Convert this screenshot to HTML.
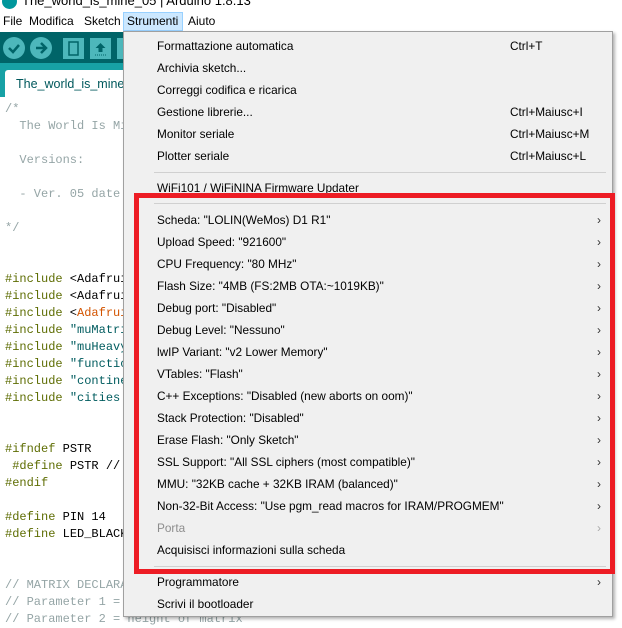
<!DOCTYPE html>
<html><head><meta charset="utf-8"><style>
*{margin:0;padding:0;box-sizing:border-box}
body{width:622px;height:627px;overflow:hidden;background:#fff;font-family:"Liberation Sans",sans-serif;position:relative}
.abs{position:absolute}
.title{left:0;top:0;width:622px;height:12px;background:#fff;overflow:hidden}
.title span{position:absolute;left:22px;top:-7px;font-size:13px;color:#000;white-space:nowrap}
.logo{left:2px;top:-6px;width:15px;height:15px;border-radius:50%;background:#00979c}
.mb{top:12px;height:19px;font-size:12px;color:#000;line-height:19px}
.tb{left:0;top:32px;width:124px;height:31px;background:#006468}
.rb{width:22px;height:22px;border-radius:50%;background:#4db7bb;top:37px}
.sq{width:21px;height:21px;background:#4db7bb;top:38px}
.ts{left:0;top:63px;width:124px;height:34px;background:#17a1a5}
.tab{left:5px;top:70px;width:119px;height:27px;background:#fff;border-radius:3px 0 0 0;font-size:12.5px;color:#00585c;padding:7px 0 0 11px;white-space:nowrap;overflow:hidden}
.code{font-family:"Liberation Mono",monospace;font-size:12px;white-space:pre;left:5px;line-height:17px}
.menu{left:123px;top:31px;width:490px;height:586px;background:#f0f0f0;border:1px solid #a0a0a0;box-shadow:2px 2px 3px rgba(0,0,0,.3)}
.it{position:absolute;left:33px;font-size:11.8px;color:#000;white-space:nowrap;height:22px;line-height:22px}
.sc{position:absolute;left:386px;font-size:11.8px;white-space:nowrap;height:22px;line-height:22px}
.ar{position:absolute;left:473px;font-size:12px;color:#333;height:22px;line-height:22px}
.sep{position:absolute;left:30px;right:6px;height:1px;background:#d0d0d0}
.red{left:134px;top:193px;width:481px;height:381px;border:5px solid #ed1c24}
</style></head><body>
<div class="abs title"><div class="abs logo"></div><span>The_world_is_mine_05 | Arduino 1.8.13</span></div>
<div class="abs mb" style="left:3px">File</div>
<div class="abs mb" style="left:29px">Modifica</div>
<div class="abs mb" style="left:84px">Sketch</div>
<div class="abs" style="left:123px;top:12px;width:60px;height:19px;background:#cce8ff;border:1px solid #99d1ff"></div>
<div class="abs mb" style="left:127px">Strumenti</div>
<div class="abs mb" style="left:188px">Aiuto</div>
<div class="abs tb"></div>
<div class="abs rb" style="left:3px"><svg width="22" height="22"><path d="M6 11l4 4 6-7" stroke="#006468" stroke-width="2.5" fill="none"/></svg></div>
<div class="abs rb" style="left:30px"><svg width="22" height="22"><path d="M6 11h9M11 6l5 5-5 5" stroke="#006468" stroke-width="2.5" fill="none"/></svg></div>
<div class="abs sq" style="left:63px"><svg width="21" height="21"><rect x="6" y="4" width="9" height="13" fill="none" stroke="#006468" stroke-width="1.5"/></svg></div>
<div class="abs sq" style="left:90px"><svg width="21" height="21"><path d="M10.5 5l-5 5h3v4h4v-4h3z" fill="#006468"/><path d="M5 17h11" stroke="#006468" stroke-dasharray="1 1"/></svg></div>
<div class="abs sq" style="left:117px;width:7px"></div>
<div class="abs ts"></div>
<div class="abs tab">The_world_is_mine_05</div>
<div class="abs code" style="top:101px;color:#95a5a6">/*
  The World Is Mine

  Versions:

  - Ver. 05 date

*/</div>
<div class="abs code" style="top:271px;color:#000"><span style="color:#5e6d03">#include</span> &lt;Adafruit
<span style="color:#5e6d03">#include</span> &lt;Adafruit
<span style="color:#5e6d03">#include</span> &lt;<span style="color:#d35400">Adafruit</span>
<span style="color:#5e6d03">#include</span> <span style="color:#005c5f">"muMatrix</span>
<span style="color:#5e6d03">#include</span> <span style="color:#005c5f">"muHeavy</span>
<span style="color:#5e6d03">#include</span> <span style="color:#005c5f">"functio</span>
<span style="color:#5e6d03">#include</span> <span style="color:#005c5f">"contine</span>
<span style="color:#5e6d03">#include</span> <span style="color:#005c5f">"cities.</span>


<span style="color:#5e6d03">#ifndef</span> PSTR
 <span style="color:#5e6d03">#define</span> PSTR //
<span style="color:#5e6d03">#endif</span>

<span style="color:#5e6d03">#define</span> PIN 14
<span style="color:#5e6d03">#define</span> LED_BLACK


<span style="color:#95a5a6">// MATRIX DECLARA
// Parameter 1 =
// Parameter 2 = height of matrix</span></div>
<div class="abs menu">
<div class="it" style="top:3px">Formattazione automatica</div><div class="sc" style="top:3px">Ctrl+T</div>
<div class="it" style="top:25px">Archivia sketch...</div>
<div class="it" style="top:47px">Correggi codifica e ricarica</div>
<div class="it" style="top:69px">Gestione librerie...</div><div class="sc" style="top:69px">Ctrl+Maiusc+I</div>
<div class="it" style="top:91px">Monitor seriale</div><div class="sc" style="top:91px">Ctrl+Maiusc+M</div>
<div class="it" style="top:113px">Plotter seriale</div><div class="sc" style="top:113px">Ctrl+Maiusc+L</div>
<div class="sep" style="top:140px"></div>
<div class="it" style="top:145px">WiFi101 / WiFiNINA Firmware Updater</div>
<div class="sep" style="top:171px"></div>
<div class="it" style="top:177px">Scheda: "LOLIN(WeMos) D1 R1"</div><div class="ar" style="top:177px">›</div>
<div class="it" style="top:199px">Upload Speed: "921600"</div><div class="ar" style="top:199px">›</div>
<div class="it" style="top:221px">CPU Frequency: "80 MHz"</div><div class="ar" style="top:221px">›</div>
<div class="it" style="top:243px">Flash Size: "4MB (FS:2MB OTA:~1019KB)"</div><div class="ar" style="top:243px">›</div>
<div class="it" style="top:265px">Debug port: "Disabled"</div><div class="ar" style="top:265px">›</div>
<div class="it" style="top:287px">Debug Level: "Nessuno"</div><div class="ar" style="top:287px">›</div>
<div class="it" style="top:309px">lwIP Variant: "v2 Lower Memory"</div><div class="ar" style="top:309px">›</div>
<div class="it" style="top:331px">VTables: "Flash"</div><div class="ar" style="top:331px">›</div>
<div class="it" style="top:353px">C++ Exceptions: "Disabled (new aborts on oom)"</div><div class="ar" style="top:353px">›</div>
<div class="it" style="top:375px">Stack Protection: "Disabled"</div><div class="ar" style="top:375px">›</div>
<div class="it" style="top:397px">Erase Flash: "Only Sketch"</div><div class="ar" style="top:397px">›</div>
<div class="it" style="top:419px">SSL Support: "All SSL ciphers (most compatible)"</div><div class="ar" style="top:419px">›</div>
<div class="it" style="top:441px">MMU: "32KB cache + 32KB IRAM (balanced)"</div><div class="ar" style="top:441px">›</div>
<div class="it" style="top:463px">Non-32-Bit Access: "Use pgm_read macros for IRAM/PROGMEM"</div><div class="ar" style="top:463px">›</div>
<div class="it" style="top:485px;color:#8d8d8d">Porta</div><div class="ar" style="top:485px;color:#aaa">›</div>
<div class="it" style="top:507px">Acquisisci informazioni sulla scheda</div>
<div class="sep" style="top:534px"></div>
<div class="it" style="top:539px">Programmatore</div><div class="ar" style="top:539px">›</div>
<div class="it" style="top:561px">Scrivi il bootloader</div>
</div>
<div class="abs red"></div>
</body></html>
